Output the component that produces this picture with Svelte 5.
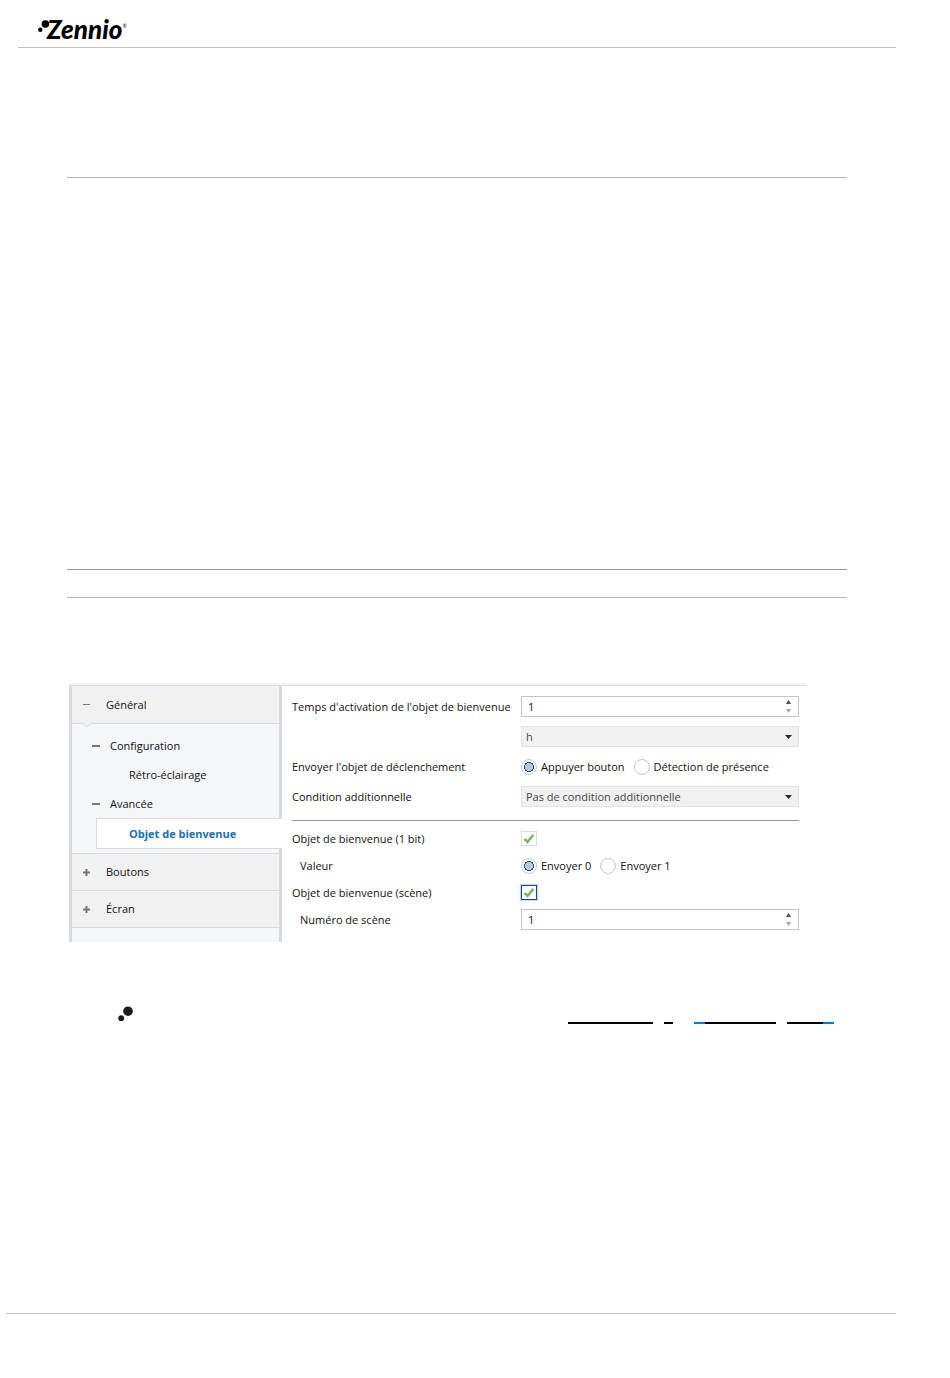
<script lang="ts">
    let delay = $state(1);
    let unit = $state("h");
    let trigger = $state("button");
    let condition = $state("none");
    let bitObject = $state(true);
    let bitValue = $state("0");
    let sceneObject = $state(true);
    let sceneNumber = $state(1);

    const tree = [
        { label: "Configuration", branch: true },
        { label: "Rétro-éclairage" },
        { label: "Avancée", branch: true },
        { label: "Objet de bienvenue", active: true },
    ];
    const closedSections = ["Boutons", "Écran"];
</script>

{#snippet spinArrows()}
    <svg class="arrows" width="7" height="15" viewBox="0 0 7 15">
        <path d="M3.5 1L6.2 5H0.8z" fill="#555" />
        <path d="M3.5 14L6.2 10H0.8z" fill="#a8a8a8" />
    </svg>
{/snippet}

{#snippet dropArrow()}
    <svg class="arrows" width="7" height="4" viewBox="0 0 7 4">
        <path d="M0 0H7L3.5 4z" fill="#2b2b2b" />
    </svg>
{/snippet}

{#snippet tick()}
    <svg class="tick" width="12" height="11" viewBox="0 0 12 11">
        <path d="M1.5 5.8L4.5 8.8L10.5 1.8" fill="none" stroke="#7fb56f" stroke-width="2.6" />
    </svg>
{/snippet}

<div class="page">
    <header class="header">
        <a class="brand" href="#top">
            <svg class="brand-dots" width="12" height="13" viewBox="0 0 12 13">
                <circle cx="7.4" cy="4" r="3.8" />
                <circle cx="2.3" cy="9.8" r="2.2" />
            </svg>
            <span>Zennio</span>
            <sup>®</sup>
        </a>
    </header>

    <main class="content">
        <hr class="first-rule" />
        <div class="note"></div>

        <div class="panel">
            <nav class="sidebar">
                <button class="section open">
                    <svg width="9" height="9" viewBox="0 0 9 9">
                        <path d="M1 4.5H8" stroke="#777" />
                    </svg>
                    Général
                </button>
                <div class="tree">
                    <svg class="notch" width="12" height="5" viewBox="0 0 12 5">
                        <path d="M0 0L2 0.5L5 3.5H7L10 0.5L12 0" fill="#f1f1f1" stroke="#d9dadc" />
                    </svg>
                    {#each tree as item}
                        <button class="node" class:branch={item.branch} class:active={item.active}>
                            {#if item.branch}
                                <svg width="8" height="8" viewBox="0 0 8 8">
                                    <path d="M0 4H8" stroke="#777" stroke-width="2" />
                                </svg>
                            {/if}
                            {item.label}
                        </button>
                    {/each}
                </div>
                {#each closedSections as section}
                    <button class="section">
                        <svg width="9" height="9" viewBox="0 0 9 9">
                            <path d="M1 4.5H8M4.5 1V8" stroke="#777" stroke-width="2" />
                        </svg>
                        {section}
                    </button>
                {/each}
            </nav>

            <form class="form">
                <div class="group">
                    <div class="row">
                        <label for="delay">Temps d'activation de l'objet de bienvenue</label>
                        <div class="field">
                            <input id="delay" type="number" bind:value={delay} />
                            {@render spinArrows()}
                        </div>
                    </div>
                    <div class="row">
                        <span></span>
                        <div class="field">
                            <select aria-label="Unité" bind:value={unit}>
                                <option value="h">h</option>
                                <option value="min">min</option>
                                <option value="s">s</option>
                            </select>
                            {@render dropArrow()}
                        </div>
                    </div>
                    <div class="row">
                        <span id="trigger-label">Envoyer l'objet de déclenchement</span>
                        <div class="radios" role="radiogroup" aria-labelledby="trigger-label">
                            <label><input type="radio" value="button" bind:group={trigger} />Appuyer bouton</label>
                            <label><input type="radio" value="presence" bind:group={trigger} />Détection de présence</label>
                        </div>
                    </div>
                    <div class="row">
                        <label for="condition">Condition additionnelle</label>
                        <div class="field">
                            <select id="condition" bind:value={condition}>
                                <option value="none">Pas de condition additionnelle</option>
                            </select>
                            {@render dropArrow()}
                        </div>
                    </div>
                </div>

                <div class="group tight">
                    <div class="row">
                        <label for="bit-object">Objet de bienvenue (1 bit)</label>
                        <div class="check">
                            <input id="bit-object" type="checkbox" bind:checked={bitObject} />
                            {#if bitObject}{@render tick()}{/if}
                        </div>
                    </div>
                    <div class="row sub">
                        <span id="value-label">Valeur</span>
                        <div class="radios" role="radiogroup" aria-labelledby="value-label">
                            <label><input type="radio" value="0" bind:group={bitValue} />Envoyer 0</label>
                            <label><input type="radio" value="1" bind:group={bitValue} />Envoyer 1</label>
                        </div>
                    </div>
                    <div class="row">
                        <label for="scene-object">Objet de bienvenue (scène)</label>
                        <div class="check current">
                            <input id="scene-object" type="checkbox" bind:checked={sceneObject} />
                            {#if sceneObject}{@render tick()}{/if}
                        </div>
                    </div>
                    <div class="row sub">
                        <label for="scene-number">Numéro de scène</label>
                        <div class="field">
                            <input id="scene-number" type="number" bind:value={sceneNumber} />
                            {@render spinArrows()}
                        </div>
                    </div>
                </div>
            </form>
        </div>

        <div class="reference">
            <svg width="16" height="16" viewBox="0 0 16 16" fill="#1c1c1c">
                <circle cx="10" cy="5.2" r="4.8" />
                <circle cx="3.2" cy="12.2" r="2.9" />
            </svg>
            <div class="underlines">
                <span class="line long"></span>
                <span class="line short"></span>
                <span class="line lead"></span>
                <span class="line tail"></span>
            </div>
        </div>
    </main>

    <footer class="footer"></footer>
</div>

<style>
    :global(body) {
        margin: 0;
        background: #fff;
    }

    .page {
        font-family: "Open Sans", "Noto Sans", sans-serif;
        font-size: 11px;
        line-height: 16px;
        color: #111;
        padding-bottom: 64px;
    }

    .header {
        box-sizing: border-box;
        height: 48px;
        margin: 0 54px 0 18px;
        padding: 15px 0 0 20px;
        border-bottom: 1px solid #c0c0c0;
    }

    .brand {
        display: inline-flex;
        align-items: flex-start;
        color: #000;
        text-decoration: none;
        font-family: Lato, sans-serif;
        font-size: 26px;
        line-height: 28px;
        font-weight: 900;
        font-style: italic;
    }

    .brand-dots {
        margin: 5px -3px 0 0;
    }

    .brand sup {
        margin-top: 8px;
        font-size: 5px;
        line-height: 6px;
        font-weight: 400;
        font-style: normal;
    }

    .content {
        margin: 0 103px 0 67px;
    }

    .first-rule {
        margin: 129px 0 0;
        border: 0;
        border-top: 1px solid #b4b4b4;
    }

    .note {
        height: 27px;
        margin-top: 391px;
        border-top: 1px solid #999;
        border-bottom: 1px solid #b4b4b4;
    }

    .panel {
        display: grid;
        grid-template-columns: 213px 1fr;
        margin: 85px 40px 0 2px;
        border-top: 2px solid #f4f4f4;
    }

    .sidebar {
        display: flex;
        flex-direction: column;
        border: solid #d9dadc;
        border-width: 1px 3px 0;
        background: #f4f6f9;
    }

    .section,
    .node {
        display: flex;
        align-items: center;
        border: 0;
        background: none;
        color: inherit;
        font: inherit;
        text-align: left;
    }

    .section {
        gap: 15px;
        height: 37px;
        padding: 0 10px;
        border-bottom: 1px solid #d9dadc;
        background: #f1f1f1;
    }

    .section.open {
        height: 38px;
    }

    .tree {
        display: flex;
        flex-direction: column;
        padding-bottom: 4px;
        border-bottom: 1px solid #d9dadc;
    }

    .notch {
        margin: -1px 0 3px 9px;
    }

    .node {
        height: 29px;
        margin-left: 24px;
        padding: 0 0 0 33px;
    }

    .node.branch {
        gap: 10px;
        margin-left: 20px;
        padding: 0;
    }

    .node.active {
        position: relative;
        height: 31px;
        margin-right: -3px;
        padding-left: 32px;
        border: 1px solid #d9dadc;
        border-right: 0;
        background: #fff;
        color: #1b6fb5;
        font-weight: 700;
    }

    .form {
        padding: 10px 8px 12px 10px;
        border-top: 1px solid #d9dadc;
    }

    .group {
        display: grid;
        gap: 9px;
    }

    .group.tight {
        gap: 6px;
        margin-top: 13px;
        padding-top: 7px;
        border-top: 1px solid #999;
    }

    .row {
        display: grid;
        grid-template-columns: 229px 1fr;
        align-items: center;
        height: 21px;
    }

    .sub > :first-child {
        padding-left: 8px;
    }

    .field,
    .check {
        display: grid;
        align-items: center;
    }

    .field > *,
    .check > :global(*) {
        grid-area: 1 / 1;
    }

    .field input,
    .field select {
        box-sizing: border-box;
        width: 100%;
        height: 21px;
        margin: 0;
        padding: 0 6px;
        border: 1px solid #c4c4c4;
        border-radius: 0;
        background: #fff;
        color: #111;
        font: inherit;
        appearance: none;
        -moz-appearance: textfield;
    }

    .field input::-webkit-inner-spin-button {
        appearance: none;
        margin: 0;
    }

    .field select {
        padding: 0 4px;
        border-color: #e3e3e3;
        background: #f1f1f1;
        color: #444;
    }

    .arrows {
        justify-self: end;
        margin-right: 7px;
        pointer-events: none;
    }

    .radios {
        display: flex;
        gap: 9px;
    }

    .radios label {
        display: flex;
        align-items: center;
        gap: 4px;
    }

    .radios input {
        box-sizing: border-box;
        width: 16px;
        height: 16px;
        margin: 0;
        border: 1px solid #c8c8c8;
        border-radius: 50%;
        background: #fff;
        appearance: none;
    }

    .radios input:checked {
        background: radial-gradient(circle, #b9c9dc 4px, #24507f 4px, #24507f 5px, #fff 5px);
    }

    .check {
        width: 16px;
        justify-items: center;
    }

    .check input {
        box-sizing: border-box;
        width: 16px;
        height: 15px;
        margin: 0;
        border: 1px solid #dcdcdc;
        background: #fff;
        appearance: none;
    }

    .check.current input {
        border-color: #1a4a80;
        box-shadow: 0 0 1px 1px #c5d6e6;
    }

    .tick {
        pointer-events: none;
    }

    .reference {
        display: flex;
        justify-content: space-between;
        margin: 64px 13px 0 51px;
    }

    .underlines {
        display: flex;
        align-items: flex-end;
        margin-bottom: -2px;
    }

    .line {
        height: 2px;
        background: #000;
    }

    .long {
        width: 85px;
        margin-right: 11px;
    }

    .short {
        width: 9px;
        margin-right: 21px;
    }

    .lead {
        box-sizing: border-box;
        width: 82px;
        margin-right: 11px;
        background: linear-gradient(to right, #0a7ad1 11px, #000 11px);
    }

    .tail {
        width: 47px;
        background: linear-gradient(to left, #0a7ad1 11px, #000 11px);
    }

    .footer {
        margin: 291px 54px 0 6px;
        border-top: 1px solid #c0c0c0;
    }
</style>
